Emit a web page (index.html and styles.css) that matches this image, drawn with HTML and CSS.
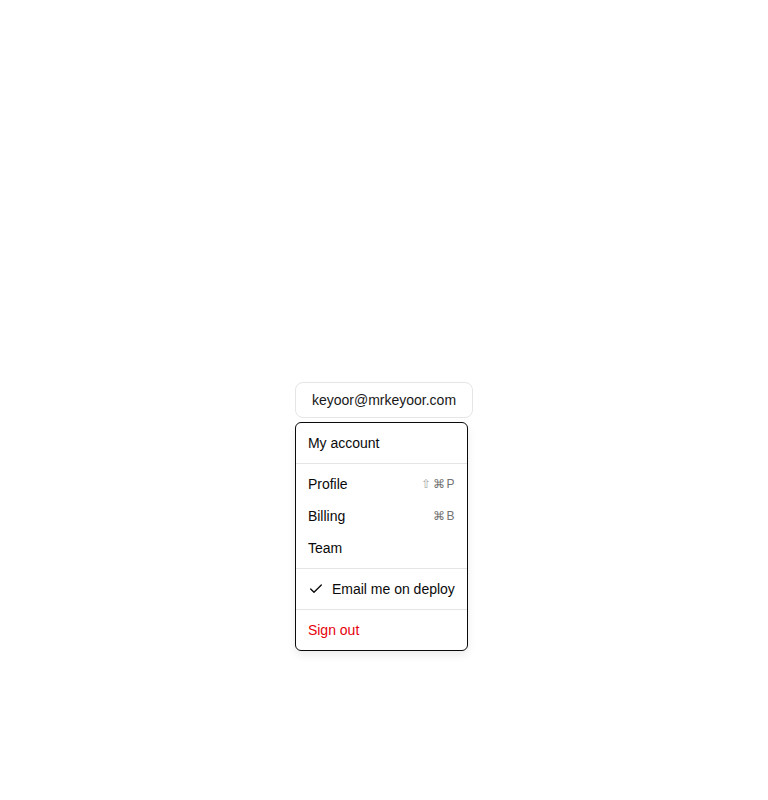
FILE: index.html
```html
<!DOCTYPE html>
<html lang="en">

<head>
    <meta charset="UTF-8">
    <meta name="viewport" content="width=device-width, initial-scale=1.0">
    <title>Account Menu</title>
    <link rel="stylesheet" href="styles.css">
</head>

<body>
    <div class="stage">
        <div class="account-menu">
            <button class="trigger" type="button">keyoor@mrkeyoor.com</button>
            <div class="menu-content">
                <div class="menu-label">My account</div>
                <div class="separator"></div>
                <div class="menu-item">Profile<span class="shortcut"><span class="shift">⇧</span>⌘P</span></div>
                <div class="menu-item">Billing<span class="shortcut">⌘B</span></div>
                <div class="menu-item">Team</div>
                <div class="separator"></div>
                <div class="menu-item checked">
                    <svg class="check" width="16" height="16" viewBox="0 0 24 24" fill="none" stroke="currentColor"
                        stroke-width="2" stroke-linecap="round" stroke-linejoin="round">
                        <path d="M20 6 9 17l-5-5"></path>
                    </svg>
                    <span class="item-text">Email me on deploy</span>
                </div>
                <div class="separator"></div>
                <div class="menu-item danger">Sign out</div>
            </div>
        </div>
    </div>
</body>

</html>
```

FILE: styles.css
```css
* {
    box-sizing: border-box;
}

body {
    margin: 0;
    font-family: "Liberation Sans", Arial, sans-serif;
    background-color: #fff;
    color: #0a0a0a;
}

.stage {
    height: 800px;
    display: flex;
    align-items: center;
    justify-content: center;
}

.account-menu {
    position: relative;
}

.trigger {
    height: 36px;
    padding: 0 16px;
    font-family: inherit;
    font-size: 14px;
    color: #171717;
    background-color: #fff;
    border: 1px solid #e5e5e5;
    border-radius: 8px;
    cursor: pointer;
}

.menu-content {
    position: absolute;
    top: 40px;
    left: 0;
    width: 173px;
    padding: 4px 0;
    background-color: #fff;
    border: 1px solid #0a0a0a;
    border-radius: 6px;
    box-shadow: 0 4px 8px rgba(0, 0, 0, 0.08);
    font-size: 14px;
}

.menu-label,
.menu-item {
    height: 32px;
    padding: 0 12px;
    display: flex;
    align-items: center;
    line-height: 1;
}

.menu-item {
    justify-content: space-between;
}

.shortcut {
    font-size: 12px;
    color: #737373;
    letter-spacing: 1.5px;
    margin-right: -1px;
}

.shift {
    font-family: "DejaVu Sans", sans-serif;
    font-variant-emoji: text;
    color: #a3a3a3;
}

.separator {
    height: 1px;
    margin: 4px 0;
    background-color: #e5e5e5;
}

.menu-item.checked {
    justify-content: flex-start;
    gap: 8px;
}

.check {
    flex-shrink: 0;
}

.danger {
    color: #e7000b;
}
```
